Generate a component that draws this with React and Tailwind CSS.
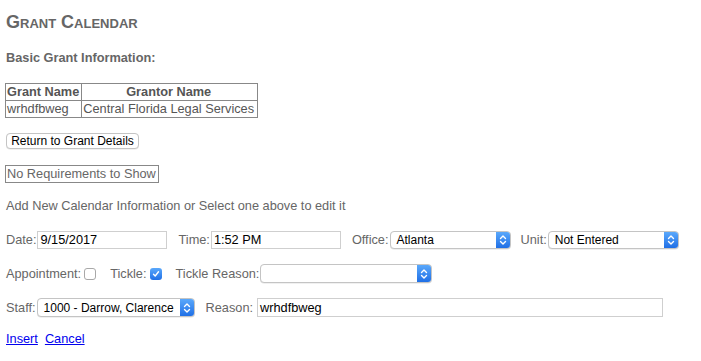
import React from "react";

function Chevrons() {
  return (
    <svg width="8" height="12" viewBox="0 0 8 12" fill="none" stroke="white" strokeWidth="1.4" strokeLinecap="round" strokeLinejoin="round">
      <path d="M1.5 4.5 L4 2 L6.5 4.5" />
      <path d="M1.5 7.5 L4 10 L6.5 7.5" />
    </svg>
  );
}

function Select({ width, value, h = "h-[18px]" }) {
  return (
    <div
      className={`flex ${h} items-stretch rounded-[4px] border border-[#c4c4c4] bg-white shadow-[0_0.5px_0.5px_rgba(0,0,0,0.12)]`}
      style={{ width }}
    >
      <div className="flex flex-1 items-center overflow-hidden whitespace-nowrap pl-[6px] text-[12px] text-black">
        {value}
      </div>
      <div className="flex w-[14px] items-center justify-center rounded-r-[3px] bg-gradient-to-b from-[#5aa8fb] to-[#1f6fe6]">
        <Chevrons />
      </div>
    </div>
  );
}

function TextInput({ width, value }) {
  return (
    <div
      className="flex h-[18px] items-center border border-[#cfcfcf] bg-white pl-[2px] text-[12.75px] text-black"
      style={{ width }}
    >
      {value}
    </div>
  );
}

function Checkbox({ checked }) {
  if (checked) {
    return (
      <div className="flex h-[12px] w-[12px] items-center justify-center rounded-[3px] bg-gradient-to-b from-[#5aa8fb] to-[#1f6fe6]">
        <svg width="8" height="8" viewBox="0 0 8 8" fill="none" stroke="white" strokeWidth="1.4" strokeLinecap="round" strokeLinejoin="round">
          <path d="M1.5 4.3 L3.2 6 L6.5 1.8" />
        </svg>
      </div>
    );
  }
  return <div className="h-[12px] w-[12px] rounded-[3px] border border-[#a8a8a8] bg-white" />;
}

export default function App() {
  return (
    <div className="min-h-[361px] w-[701px] bg-white px-[6px] text-[12.75px] text-[#666] [font-family:'Liberation_Sans',Arial,sans-serif]">
      <div className="pt-[12px] text-[18px] font-bold leading-[20px] text-[#666] [font-variant:small-caps]">
        Grant Calendar
      </div>
      <div className="mt-[18px] text-[12.75px] font-bold leading-[16px] text-[#666]">
        Basic Grant Information:
      </div>
      <table className="ml-[-1px] mt-[17px] border-collapse border border-[#888] whitespace-nowrap text-[12.75px] leading-[14px] text-[#555]">
        <thead>
          <tr>
            <th className="border border-[#888] py-[1px] pl-[1px] pr-[2px] text-left font-bold">Grant Name</th>
            <th className="border border-[#888] py-[1px] pl-[1px] pr-[3px] text-center font-bold">Grantor Name</th>
          </tr>
        </thead>
        <tbody>
          <tr>
            <td className="border border-[#888] py-[1px] pl-[1px] pr-[2px]">wrhdfbweg</td>
            <td className="border border-[#888] py-[1px] pl-[1px] pr-[3px]">Central Florida Legal Services</td>
          </tr>
        </tbody>
      </table>
      <div className="mt-[15px] flex">
        <button className="flex h-[16px] w-[133px] items-center justify-center rounded-[4px] border border-[#c4c4c4] bg-white text-[12px] leading-none text-black shadow-[0_0.5px_0.5px_rgba(0,0,0,0.1)]">
          Return to Grant Details
        </button>
      </div>
      <div className="mt-[16px] flex">
        <div className="ml-[-1px] flex h-[18px] items-center whitespace-nowrap border border-[#888] pl-[1px] pr-[2px] text-[12.75px] text-[#666]">
          No Requirements to Show
        </div>
      </div>
      <div className="mt-[15px] leading-[16px]">Add New Calendar Information or Select one above to edit it</div>

      <div className="mt-[17px] flex h-[18px] items-center whitespace-nowrap">
        <span>Date:</span>
        <div className="ml-[1px]"><TextInput width={130} value="9/15/2017" /></div>
        <span className="ml-[11px]">Time:</span>
        <div className="ml-[1px]"><TextInput width={130} value="1:52 PM" /></div>
        <span className="ml-[11px]">Office:</span>
        <div className="ml-[1px]"><Select width={121} value="Atlanta" /></div>
        <span className="ml-[10px]">Unit:</span>
        <div className="ml-[1px]"><Select width={131} value="Not Entered" /></div>
      </div>

      <div className="mt-[15px] flex h-[19px] items-center whitespace-nowrap">
        <span>Appointment:</span>
        <div className="ml-[3px]"><Checkbox /></div>
        <span className="ml-[14px]">Tickle:</span>
        <div className="ml-[3px]"><Checkbox checked /></div>
        <span className="ml-[14px]">Tickle Reason:</span>
        <div className="ml-[1px]"><Select width={172} value="" h="h-[19px]" /></div>
      </div>

      <div className="mt-[15px] flex h-[19px] items-center whitespace-nowrap">
        <span>Staff:</span>
        <div className="ml-[1px]"><Select width={158} value="1000 - Darrow, Clarence" h="h-[19px]" /></div>
        <span className="ml-[11px]">Reason:</span>
        <div className="ml-[4px] flex h-[19px] w-[406px] items-center border border-[#cfcfcf] bg-white pl-[2px] text-[12.75px] text-black">
          wrhdfbweg
        </div>
      </div>

      <div className="mt-[14px] flex gap-[7px] leading-[16px]">
        <a href="#" className="text-[#0000ee] underline">Insert</a>
        <a href="#" className="text-[#0000ee] underline">Cancel</a>
      </div>
    </div>
  );
}
